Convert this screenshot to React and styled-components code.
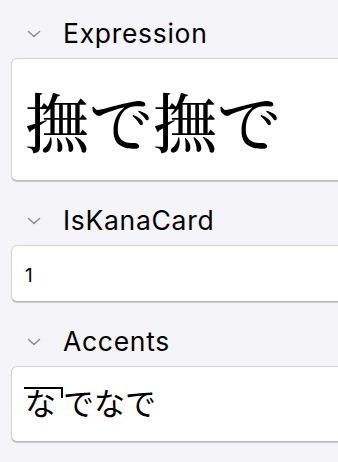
import React from "react";
import styled, { createGlobalStyle } from "styled-components";

const Global = createGlobalStyle`
  html, body { margin: 0; padding: 0; background: #f5f4f8; }
  body { font-family: Inter, "Noto Sans CJK JP", sans-serif; color: #000; }
`;

const Page = styled.div`
  width: 338px;
  height: 462px;
  overflow: hidden;
  padding: 18px 0 0 11px;
  box-sizing: border-box;
  background: #f5f4f8;
`;

const Section = styled.section`
  & + & { margin-top: 24px; }
`;

const Header = styled.div`
  display: flex;
  align-items: center;
  height: 30px;
`;

const ChevronBox = styled.span`
  display: flex;
  align-items: center;
  justify-content: center;
  width: 14px;
  margin-left: 16px;
  margin-right: 22px;
  margin-top: 2px;
`;

const Title = styled.span`
  font-family: Inter, sans-serif;
  font-size: 26.5px;
  font-weight: 400;
  line-height: 30px;
  letter-spacing: 0.7px;
  color: #000;
`;

const Card = styled.div`
  margin-top: 10px;
  width: 360px;
  box-sizing: border-box;
  background: #fff;
  border: 1px solid #d3d2d7;
  border-bottom-color: #b9b8bd;
  border-radius: 6px;
  box-shadow: 0 1px 1px rgba(0, 0, 0, 0.18);
  padding: ${(p) => p.$pad};
  display: flex;
  align-items: center;
  height: ${(p) => p.$h}px;
`;

const BigText = styled.div`
  font-family: "Noto Serif CJK JP", "Noto Sans CJK JP", serif;
  font-size: 64px;
  font-weight: 500;
  line-height: 1;
  color: #000;
`;

const SmallText = styled.div`
  font-family: Inter, sans-serif;
  font-size: 19px;
  color: #000;
  padding-top: 3px;
`;

const KanaText = styled.div`
  font-family: "Noto Sans CJK JP", sans-serif;
  font-size: 31px;
  line-height: 1;
  color: #000;
  margin-top: -6px;
`;

const Accent = styled.span`
  position: relative;
  display: inline-block;
  padding-right: 7px;
  &::before {
    content: "";
    position: absolute;
    left: -1px;
    right: 0;
    top: 1px;
    height: 2px;
    background: #000;
  }
  &::after {
    content: "";
    position: absolute;
    right: 0;
    top: 1px;
    width: 2px;
    height: 11px;
    background: #000;
  }
`;

const Chevron = () => (
  <svg width="14" height="8" viewBox="0 0 14 8" fill="none">
    <path d="M1.5 1.5 L7 6.5 L12.5 1.5" stroke="#8e8e93" strokeWidth="1.6" strokeLinecap="round" strokeLinejoin="round" />
  </svg>
);

const Field = ({ title, children, h, pad }) => (
  <Section>
    <Header>
      <ChevronBox>
        <Chevron />
      </ChevronBox>
      <Title>{title}</Title>
    </Header>
    <Card $h={h} $pad={pad}>{children}</Card>
  </Section>
);

export default function App() {
  return (
    <>
      <Global />
      <Page>
        <Field title="Expression" h={123} pad="0 0 2px 13px">
          <BigText>撫で撫で</BigText>
        </Field>
        <Field title="IsKanaCard" h={57} pad="0 0 0 13px">
          <SmallText>1</SmallText>
        </Field>
        <Field title="Accents" h={76} pad="0 0 0 13px">
          <KanaText>
            <Accent>な</Accent>でなで
          </KanaText>
        </Field>
      </Page>
    </>
  );
}
